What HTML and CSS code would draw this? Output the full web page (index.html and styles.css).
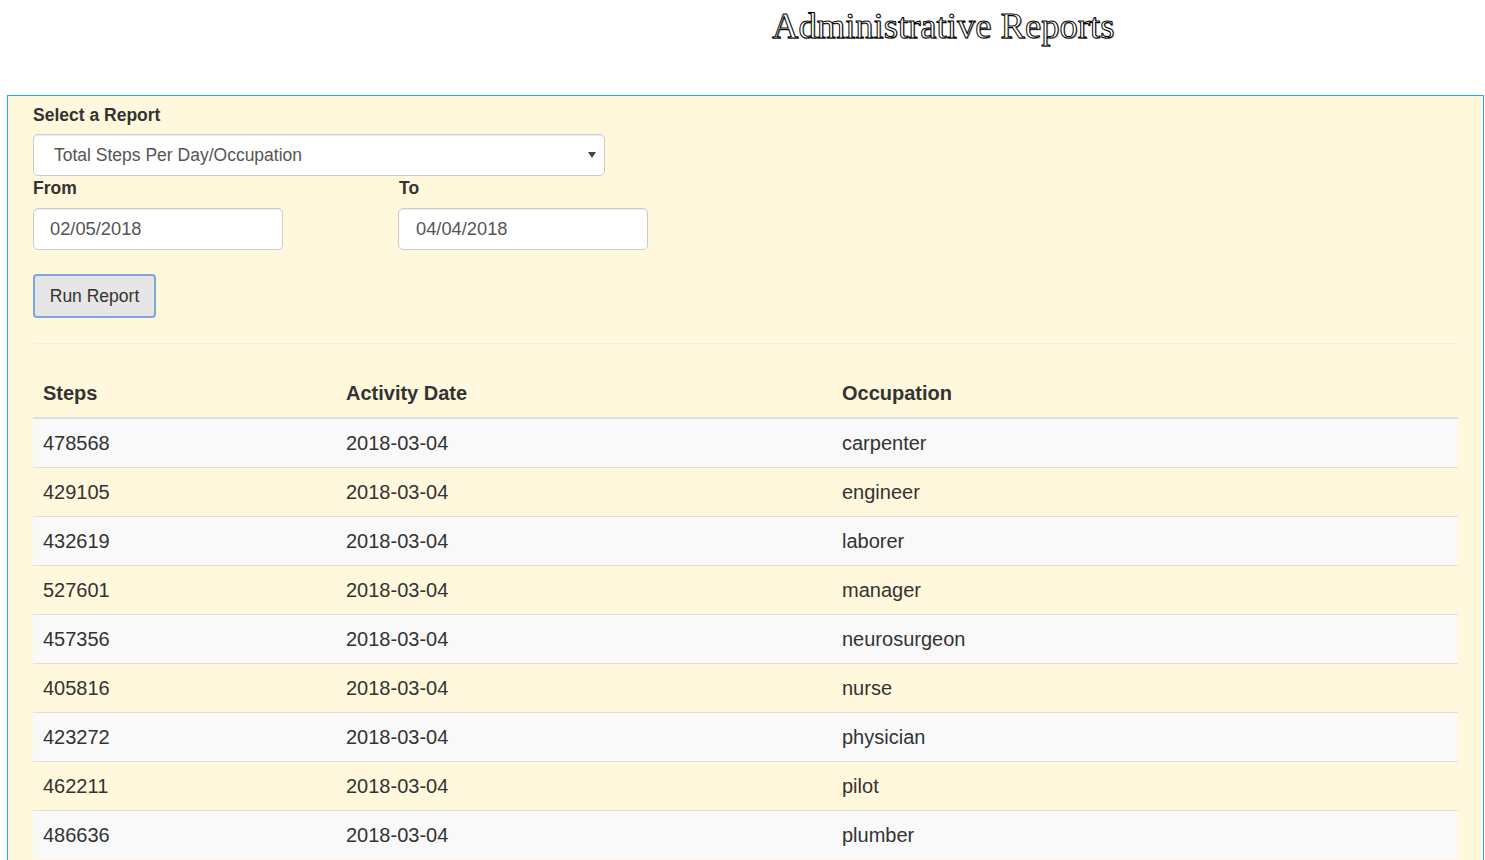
FILE: index.html
```html
<!DOCTYPE html>
<html>
<head>
<meta charset="utf-8">
<title>Administrative Reports</title>
<link rel="stylesheet" href="styles.css">
</head>
<body>
<header class="page-header">
  <h1 class="page-title">Administrative Reports</h1>
</header>
<main class="panel">
  <form class="report-form">
    <label class="field-label" for="report">Select a Report</label>
    <div class="select-wrap">
      <select id="report" class="form-control select">
        <option>Total Steps Per Day/Occupation</option>
      </select>
      <svg class="select-arrow" width="8" height="6" viewBox="0 0 8 6"><path d="M0 0H8L4 6Z" fill="#444"/></svg>
    </div>
    <div class="date-row">
      <div class="date-col">
        <label class="field-label" for="from">From</label>
        <input id="from" class="form-control date-input" type="text" value="02/05/2018">
      </div>
      <div class="date-col date-col-to">
        <label class="field-label" for="to">To</label>
        <input id="to" class="form-control date-input" type="text" value="04/04/2018">
      </div>
    </div>
    <button type="button" class="btn-run">Run Report</button>
  </form>
  <hr class="divider">
  <table class="report-table">
    <thead>
      <tr><th class="c-steps">Steps</th><th class="c-date">Activity Date</th><th class="c-occ">Occupation</th></tr>
    </thead>
    <tbody>
      <tr><td>478568</td><td>2018-03-04</td><td>carpenter</td></tr>
      <tr><td>429105</td><td>2018-03-04</td><td>engineer</td></tr>
      <tr><td>432619</td><td>2018-03-04</td><td>laborer</td></tr>
      <tr><td>527601</td><td>2018-03-04</td><td>manager</td></tr>
      <tr><td>457356</td><td>2018-03-04</td><td>neurosurgeon</td></tr>
      <tr><td>405816</td><td>2018-03-04</td><td>nurse</td></tr>
      <tr><td>423272</td><td>2018-03-04</td><td>physician</td></tr>
      <tr><td>462211</td><td>2018-03-04</td><td>pilot</td></tr>
      <tr><td>486636</td><td>2018-03-04</td><td>plumber</td></tr>
    </tbody>
  </table>
</main>
</body>
</html>
```

FILE: styles.css
```css
html, body {
  margin: 0;
  padding: 0;
  background: #fff;
}
body {
  font-family: "Liberation Sans", Arial, sans-serif;
  color: #333;
  font-size: 17.5px;
  line-height: 1.42857;
}
.page-header {
  height: 95px;
  padding-top: 6px;
  box-sizing: border-box;
}
.page-title {
  margin: 0 0 0 772px;
  font-family: "Liberation Serif", "Times New Roman", serif;
  font-weight: normal;
  font-size: 36.6px;
  line-height: 40px;
  color: #fff;
  -webkit-text-stroke: 1px #000;
  text-shadow: 1px 1px 0 #999;
}
.panel {
  margin: 0 1px 0 7px;
  background: #fff8dc;
  border: 1px solid #1eb0e4;
  border-bottom: none;
  padding: 7px 25px 0 25px;
  min-height: 780px;
}
.report-form {
  display: flex;
  flex-direction: column;
  align-items: flex-start;
}
.field-label {
  display: block;
  font-weight: bold;
  font-size: 17.5px;
  line-height: 25px;
  margin-bottom: 6px;
}
.form-control {
  box-sizing: border-box;
  height: 42px;
  border: 1px solid #ccc;
  border-radius: 5px;
  background: #fff;
  color: #555;
  font-family: "Liberation Sans", Arial, sans-serif;
  font-size: 17.5px;
  box-shadow: inset 0 1px 1px rgba(0,0,0,.075);
  outline: none;
}
.select-wrap {
  position: relative;
  width: 572px;
}
.select {
  width: 100%;
  -webkit-appearance: none;
  appearance: none;
  padding: 0 30px 0 20px;
  color: #555;
}
.select-arrow {
  position: absolute;
  right: 9px;
  top: 18px;
}
.date-row {
  display: flex;
  gap: 115px;
}
.date-col {
  display: flex;
  flex-direction: column;
  align-items: flex-start;
}
.date-col .field-label {
  margin-bottom: 7px;
}
.date-col-to .field-label {
  padding-left: 1px;
}
.date-input {
  width: 250px;
  padding: 0 16px;
  font-size: 18.3px;
}
.date-col-to .date-input {
  padding-left: 17px;
}
.btn-run {
  margin-top: 24px;
  box-sizing: border-box;
  width: 123px;
  height: 44px;
  background: #e6e6e6;
  border: 2px solid #7aa9e0;
  border-radius: 4px;
  font-family: "Liberation Sans", Arial, sans-serif;
  font-size: 17.5px;
  color: #333;
  padding: 0;
}
.divider {
  margin: 25px 0 24px;
  border: 0;
  border-top: 1px solid #f2efe2;
}
.report-table {
  width: 100%;
  border-collapse: collapse;
  font-size: 20px;
  line-height: 28px;
}
.report-table th,
.report-table td {
  text-align: left;
  padding: 10px;
  vertical-align: top;
}
.report-table th {
  font-weight: bold;
  border-bottom: 2px solid #ddd;
  padding-top: 11px;
}
.report-table td {
  border-top: 1px solid #ddd;
}
.report-table tbody tr:first-child td {
  border-top: 0;
}
.report-table tbody tr:nth-child(odd) {
  background: #f9f9f9;
}
.c-steps { width: 283px; }
.c-date { width: 476px; }
```
